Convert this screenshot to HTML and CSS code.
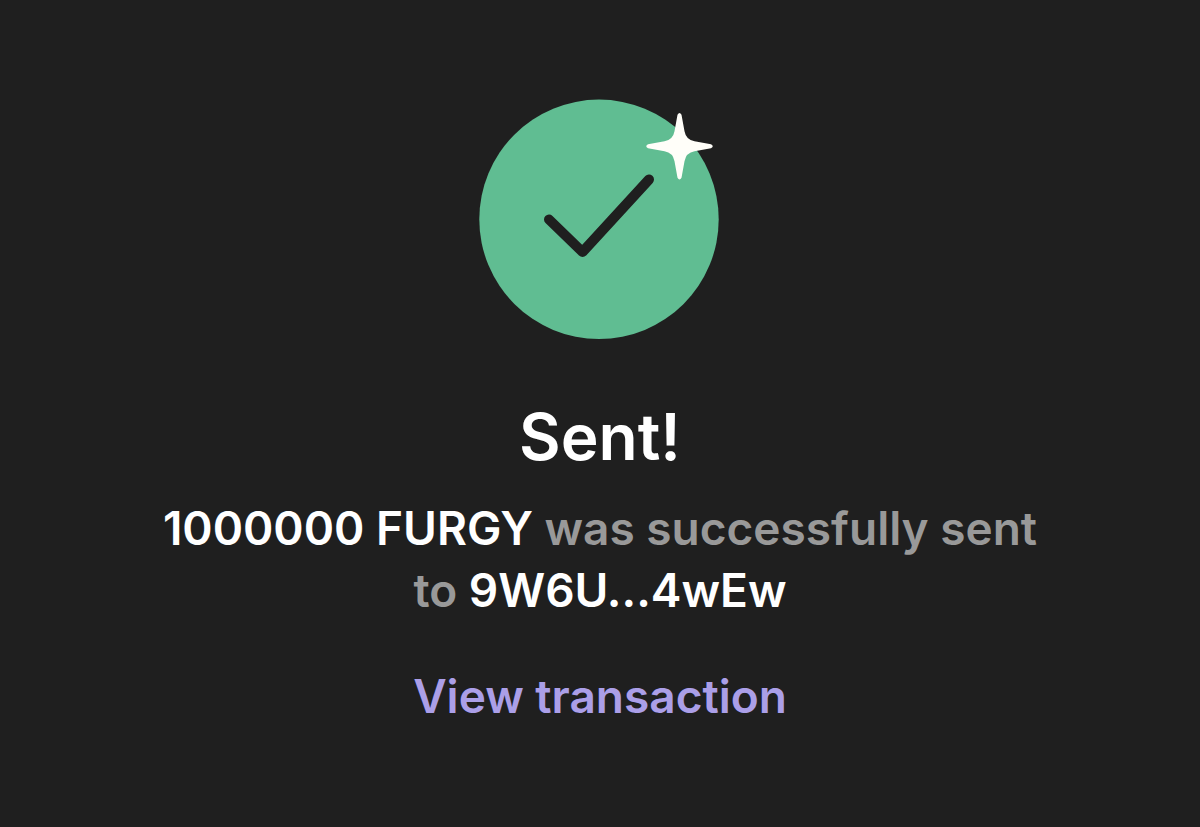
FILE: index.html
```html
<!DOCTYPE html>
<html lang="en">
<head>
<meta charset="utf-8">
<meta name="viewport" content="width=device-width, initial-scale=1">
<title>Sent</title>
<link rel="stylesheet" href="styles.css">
</head>
<body>
<main class="result">
  <svg class="result-icon" viewBox="0 0 240 240" aria-hidden="true">
    <circle cx="119" cy="120.300" r="119.700" fill="#60bd92"/>
    <path d="M69 120.500L102.500 153L169 80.500" fill="none" stroke="#1f1f1f" stroke-width="10" stroke-linecap="round" stroke-linejoin="round"/>
    <path transform="translate(199.500 47.300)" d="M-2 -31.500Q0 -35 2 -31.500L5 -15Q6.500 -6.500 15 -5L31.500 -2Q35 0 31.500 2L15 5Q6.500 6.500 5 15L2 31.500Q0 35 -2 31.500L-5 15Q-6.500 6.500 -15 5L-31.500 2Q-35 0 -31.500 -2L-15 -5Q-6.500 -6.500 -5 -15Z" fill="#fffef9"/>
  </svg>
  <h1 class="result-title">Sent!</h1>
  <p class="result-text"><strong class="result-value">1000000 FURGY</strong> was successfully sent to <strong class="result-value">9W6U...4wEw</strong></p>
  <a class="result-link" href="#">View transaction</a>
</main>
</body>
</html>
```

FILE: styles.css
```css
* { box-sizing: border-box; }
body {
  margin: 0;
  background: #1f1f1f;
  color: #fff;
  font-family: Inter, "Liberation Sans", sans-serif;
}
.result {
  display: flex;
  flex-direction: column;
  align-items: center;
  padding: 99px 150px 80px;
  text-align: center;
}
.result-icon {
  width: 240px;
  height: 240px;
  overflow: visible;
}
.result-title {
  margin: 59px 0 21px;
  font-size: 64px;
  line-height: 78px;
  font-weight: 600;
}
.result-text {
  margin: 0;
  color: #999;
  font-size: 46px;
  line-height: 62px;
  font-weight: 600;
}
.result-value { color: #fff; font-weight: 600; }
.result-link {
  margin-top: 44px;
  color: #ab9fe8;
  font-size: 46px;
  line-height: 62px;
  font-weight: 600;
  text-decoration: none;
}
```
